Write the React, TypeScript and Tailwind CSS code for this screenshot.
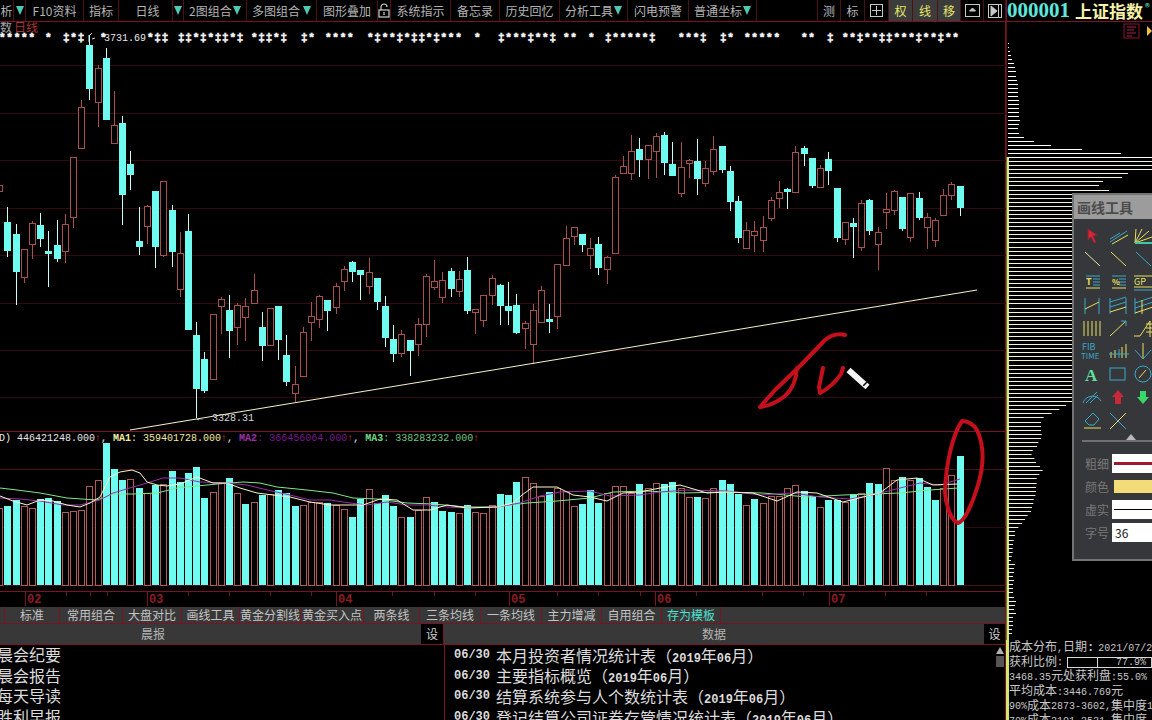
import type { ReactNode } from 'react';

const cjk = "[font-family:'Noto_Sans_CJK_SC','Liberation_Sans',sans-serif]";
const mono = "[font-family:'Liberation_Mono','Noto_Sans_CJK_SC',monospace]";

// type (0 red, 1 cyan), high, body top, body bottom, low
const candles: number[][] = [
  [0, 185, 185, 191, 191], [1, 207, 222, 251, 257], [1, 224, 234, 272, 305], [0, 249, 249, 277, 283], [0, 221, 223, 244, 259],
  [1, 213, 225, 239, 247], [1, 231, 251, 254, 287], [1, 220, 245, 259, 262], [0, 214, 224, 251, 263], [0, 157, 157, 217, 228],
  [0, 100, 107, 148, 148], [1, 35, 45, 89, 100], [0, 65, 68, 102, 127], [1, 48, 58, 120, 120], [0, 91, 125, 143, 143],
  [1, 116, 123, 195, 225], [1, 151, 164, 175, 190], [1, 207, 241, 247, 255], [0, 205, 206, 226, 244], [1, 191, 191, 247, 268],
  [0, 181, 181, 255, 257], [1, 205, 210, 252, 267], [0, 232, 253, 289, 297], [1, 214, 231, 330, 330], [1, 322, 335, 389, 418],
  [1, 352, 359, 391, 393], [0, 314, 314, 379, 379], [0, 297, 299, 306, 334], [1, 295, 310, 331, 358], [0, 303, 305, 327, 345],
  [0, 298, 306, 317, 341], [0, 274, 290, 303, 304], [1, 312, 327, 346, 361], [0, 308, 308, 345, 346], [1, 306, 306, 340, 360],
  [1, 335, 355, 382, 386], [0, 366, 384, 393, 402], [0, 327, 332, 376, 376], [0, 302, 316, 322, 341], [0, 295, 296, 319, 328],
  [1, 300, 300, 311, 331], [0, 283, 286, 307, 314], [0, 266, 269, 281, 291], [1, 261, 262, 272, 282], [1, 270, 270, 275, 300],
  [0, 258, 272, 286, 294], [1, 278, 278, 302, 310], [1, 296, 306, 338, 347], [1, 325, 339, 354, 362], [0, 330, 334, 353, 357],
  [1, 340, 340, 351, 376], [0, 318, 324, 344, 356], [0, 274, 276, 324, 337], [0, 260, 281, 287, 290], [0, 272, 280, 297, 303],
  [1, 268, 271, 289, 297], [0, 271, 279, 291, 297], [1, 257, 270, 311, 314], [0, 309, 309, 312, 334], [0, 295, 295, 320, 327],
  [0, 275, 278, 295, 305], [1, 284, 285, 306, 325], [1, 282, 306, 311, 325], [1, 294, 305, 333, 334], [0, 321, 323, 328, 349],
  [0, 304, 310, 344, 364], [0, 286, 290, 322, 322], [1, 304, 319, 322, 333], [0, 264, 264, 316, 329], [0, 226, 238, 265, 265],
  [0, 227, 227, 236, 245], [1, 234, 234, 245, 252], [0, 238, 248, 255, 269], [1, 237, 244, 268, 275], [0, 256, 257, 269, 284],
  [0, 175, 177, 253, 253], [0, 156, 166, 173, 173], [0, 135, 151, 173, 180], [1, 138, 149, 160, 177], [0, 145, 145, 159, 179],
  [0, 133, 136, 151, 178], [1, 132, 135, 163, 175], [1, 142, 164, 176, 176], [0, 142, 167, 193, 197], [0, 159, 160, 163, 178],
  [1, 139, 161, 179, 195], [0, 161, 168, 183, 187], [0, 136, 149, 171, 175], [1, 146, 146, 170, 173], [1, 166, 171, 202, 211],
  [1, 196, 201, 238, 243], [0, 222, 230, 248, 248], [0, 221, 231, 235, 252], [0, 216, 227, 240, 252], [0, 197, 200, 218, 221],
  [0, 181, 192, 198, 208], [1, 188, 189, 192, 209], [0, 146, 152, 192, 192], [1, 146, 148, 154, 166], [1, 158, 158, 186, 188],
  [0, 165, 168, 187, 188], [1, 152, 159, 171, 185], [1, 188, 188, 238, 242], [0, 222, 222, 239, 245], [1, 218, 223, 227, 258],
  [0, 200, 203, 247, 251], [1, 199, 200, 231, 235], [0, 227, 232, 244, 270], [0, 193, 209, 212, 229], [0, 190, 191, 210, 215],
  [1, 197, 197, 229, 231], [0, 193, 193, 237, 242], [1, 192, 198, 218, 220], [0, 213, 217, 227, 249], [0, 218, 220, 240, 247],
  [0, 189, 195, 215, 215], [0, 182, 184, 195, 200], [1, 186, 186, 208, 216],
];

// volume bars: type, top
const volumes: number[][] = [
  [0, 508], [1, 506], [1, 500], [0, 506], [0, 508], [1, 499], [1, 498], [1, 501], [0, 512], [0, 511], [0, 510], [0, 486], [0, 480],
  [1, 443], [1, 469], [1, 480], [0, 479], [1, 488], [0, 493], [1, 485], [0, 484], [1, 471], [1, 482], [1, 473], [1, 467], [1, 498],
  [0, 492], [0, 483], [1, 478], [0, 493], [1, 504], [0, 502], [1, 495], [0, 494], [1, 490], [1, 493], [1, 506], [0, 505], [0, 502],
  [0, 502], [1, 503], [0, 505], [0, 509], [1, 517], [1, 499], [0, 489], [1, 503], [1, 495], [1, 506], [0, 517], [1, 517], [0, 510],
  [0, 497], [1, 502], [1, 511], [1, 512], [0, 513], [1, 505], [0, 512], [0, 513], [0, 505], [1, 494], [1, 495], [1, 482], [0, 477],
  [0, 483], [0, 496], [1, 492], [0, 488], [0, 491], [0, 506], [1, 504], [1, 490], [1, 503], [0, 493], [0, 486], [0, 486], [0, 493],
  [1, 484], [0, 488], [0, 483], [1, 484], [1, 482], [0, 488], [0, 497], [1, 497], [0, 498], [0, 488], [1, 480], [1, 484], [1, 494],
  [0, 505], [1, 499], [0, 503], [0, 496], [0, 496], [0, 488], [0, 485], [1, 491], [1, 496], [0, 507], [1, 500], [1, 500], [0, 502],
  [1, 494], [0, 493], [1, 483], [1, 484], [0, 468], [0, 480], [1, 477], [0, 480], [1, 478], [1, 487], [1, 500], [0, 488], [0, 475],
  [1, 456],
];

const xOf = (n: number) => Math.round(7.3 + 8.21 * (n - 1));

const ma1 = '0,496 13,501 27,505 40,500 53,501 67,505 80,507 90,503 100,497 110,477 120,472 132,470 140,473 147,482 157,485 167,486 180,484 197,477 213,483 227,483 240,488 257,493 273,495 290,497 310,502 330,505 347,505 363,505 380,499 397,500 413,510 430,510 447,505 467,508 497,507 513,503 522,495 533,487 557,487 573,495 590,497 607,501 623,493 640,492 660,488 680,485 707,493 727,492 753,493 777,501 797,492 817,493 843,502 863,497 880,493 897,480 917,478 933,485 957,484';
const ma2 = '0,498 20,499 40,501 63,505 80,505 100,500 113,493 133,487 147,483 163,478 180,478 200,482 227,483 247,485 267,490 290,495 310,500 330,500 350,503 367,505 387,502 407,505 427,505 447,507 467,508 497,507 520,503 540,496 560,492 590,491 610,496 640,495 660,492 687,490 727,491 760,495 793,493 820,497 850,499 873,495 900,488 920,483 940,485 960,479';
const ma3 = '0,488 17,490 40,493 67,498 97,500 113,494 133,494 157,493 177,488 197,486 217,484 243,482 260,483 277,487 307,490 333,493 353,498 377,499 407,503 433,504 467,507 497,507 527,503 557,501 590,498 613,492 647,491 683,493 723,492 763,493 807,497 843,495 900,493 930,490 958,488';

const dates: [number, string][] = [[25, '02'], [147, '03'], [336, '04'], [509, '05'], [655, '06'], [829, '07']];
const axisTicks = [66, 90, 107, 188, 229, 270, 311, 392, 434, 475, 557, 598, 640, 696, 762, 803, 885, 926];
const grid = [65, 113, 160, 208, 255, 303, 350, 397];

// the row of status marks over the chart
const marks: [number, string][] = [
  [-1, '*****'], [45, '*'], [63, '‡*‡'], [100, '*'], [147, '*‡‡'], [178, '‡‡*‡*‡‡*‡'], [251, '*‡‡*‡'], [301, '‡*'], [325, '****'], [367, '*‡**‡*‡‡*‡***'],
  [474, '*'], [498, '‡***‡**‡'], [563, '**'], [588, '*'], [605, '‡*****‡'], [678, '***‡'], [720, '‡*'], [744, '*****'], [801, '**'], [827, '‡'], [842, '**‡**‡‡***‡**‡**'],
];

const distLens = [1, 1, 2, 3, 4, 6, 7, 8, 8, 9, 10, 10, 10, 10, 11, 11, 11, 11, 11, 12, 11, 10, 11, 16, 26, 43, 74, 113, 146, 146, 146, 146, 120, 114, 95, 91, 101];
const distEnds = [213, 195, 175, 152, 128, 120, 120, 120, 122, 120, 112, 108, 95, 92, 100, 105, 117, 125, 115, 107, 107, 105, 105, 103, 98, 97, 93, 90, 80, 72, 63, 52, 42, 42, 38, 36, 35, 35, 32, 30];
const distStubs = [7, 6, 6, 5, 6, 5, 5, 5, 6, 8, 7, 6, 8, 5, 5, 5, 4, 4];
const distRows: number[] = [
  ...distLens,
  ...Array.from({ length: 51 }, () => 84),
  ...distEnds.map((z) => z / 3 - 7),
  ...distStubs,
];

const toolbar: { w: number; label?: string; tri?: boolean; icon?: ReactNode; hi?: boolean; cls?: string }[] = [
  { w: 14, label: '析' },
  { w: 12, tri: true },
  { w: 58, label: 'F10资料' },
  { w: 35, label: '指标' },
  { w: 54, label: '日线', cls: 'pl-[4px]' },
  { w: 11, tri: true },
  { w: 63, label: '2图组合', tri: true },
  { w: 70, label: '多图组合', tri: true },
  { w: 61, label: '图形叠加' },
  { w: 13, icon: <Lock /> },
  { w: 60, label: '系统指示' },
  { w: 49, label: '备忘录' },
  { w: 60, label: '历史回忆' },
  { w: 68, label: '分析工具', tri: true },
  { w: 61, label: '闪电预警' },
  { w: 68, label: '普通坐标', tri: true },
  { w: 61 },
  { w: 23, label: '测' },
  { w: 24, label: '标' },
  { w: 24, icon: <PlusBox /> },
  { w: 24, label: '权', hi: true },
  { w: 25, label: '线', hi: true },
  { w: 23, label: '移', hi: true },
  { w: 23, icon: <PanelIcon /> },
  { w: 22, icon: <PlayIcon /> },
];

const tabs: [number, string][] = [
  [5, ''], [55, '标准'], [63, '常用组合'], [59, '大盘对比'], [58, '画线工具'], [61, '黄金分割线'], [63, '黄金买入点'], [56, '两条线'],
  [61, '三条均线'], [61, '一条均线'], [60, '主力增减'], [60, '自用组合'], [59, '存为模板'],
];

const reports = [
  ['06/30', '本月投资者情况统计表'],
  ['06/30', '主要指标概览'],
  ['06/30', '结算系统参与人个数统计表'],
  ['06/30', '登记结算公司证券存管情况统计表'],
];

function Lock() {
  return (
    <svg width="12" height="15" viewBox="0 0 12 15" fill="none" stroke="#d0d0d0" strokeWidth="1.2">
      <path d="M3 7V4a3 3 0 0 1 6 0" />
      <rect x="1" y="7" width="10" height="7" />
      <path d="M6 9v3" />
    </svg>
  );
}

function PlusBox() {
  return (
    <svg width="13" height="13" viewBox="0 0 13 13" fill="none" stroke="#c8c8c8">
      <rect x="0.5" y="0.5" width="12" height="12" />
      <path d="M6.5 2v9M2 6.5h9" />
    </svg>
  );
}

function PanelIcon() {
  return (
    <svg width="15" height="13" viewBox="0 0 15 13" fill="none" stroke="#c8c8c8">
      <rect x="0.5" y="0.5" width="14" height="12" />
      <path d="M7.5 4l-3 3h6z" fill="#c8c8c8" />
    </svg>
  );
}

function PlayIcon() {
  return (
    <svg width="14" height="14" viewBox="0 0 14 14" fill="none" stroke="#c8c8c8">
      <rect x="0.5" y="0.5" width="13" height="13" />
      <path d="M3 2l6 5-6 5z" fill="#c8c8c8" />
      <path d="M10.5 1v12" />
    </svg>
  );
}

function Triangle() {
  return <span className="h-0 w-0 border-x-[4px] border-t-[9px] border-x-transparent border-t-[#4fc8b4]" />;
}

function Toolbar() {
  return (
    <div className={`flex h-[22px] border-b border-[#7a1424] bg-black text-[12px] text-[#b4b4b4] ${cjk}`}>
      {toolbar.map((item, i) => (
        <div
          key={i}
          style={{ width: item.w }}
          className={`flex shrink-0 items-center whitespace-nowrap border-r border-[#4c1018] ${
            item.label && item.tri ? 'justify-between px-[5px]' : 'justify-center'
          } ${item.hi ? 'bg-[#3c3c3c] text-[#e6e868]' : ''} ${item.cls ?? ''}`}
        >
          {item.label && <span>{item.label}</span>}
          {item.icon}
          {item.tri && <Triangle />}
        </div>
      ))}
      <div className="flex shrink-0 items-center whitespace-nowrap border-l border-[#7a1424] text-[17px] leading-none">
        <span className="[font-family:'Liberation_Serif',serif] text-[21px] font-bold text-[#5ce8dc]">000001</span>
        <span className="ml-[5px] font-bold text-[#f6f2a8]">上证指数</span>
        <span className="mb-[8px] ml-[2px] text-[10px] text-[#5ce8dc]">®</span>
      </div>
    </div>
  );
}

function Chart() {
  return (
    <svg width="1006" height="585" viewBox="0 22 1006 585" className="block">
      <g stroke="#320a10" strokeWidth="1">
        {grid.map((y) => (
          <line key={y} x1="0" x2="1006" y1={y + 0.5} y2={y + 0.5} />
        ))}
      </g>
      <line x1="0" x2="1006" y1="431.5" y2="431.5" stroke="#7a1424" />
      <line x1="0" x2="1006" y1="469.5" y2="469.5" stroke="#4c1018" />
      <line x1="0" x2="1006" y1="527.5" y2="527.5" stroke="#2c0a10" />
      <line x1="0" x2="1006" y1="585.5" y2="585.5" stroke="#4c1018" />
      <line x1="0" x2="1006" y1="591.5" y2="591.5" stroke="#7a1424" />

      <text x="0" y="32" fontSize="12" fill="#a8a8a8" className={cjk}>数</text>
      <text x="14" y="32" fontSize="12" fill="#a83434" className={cjk}>日线</text>
      {marks.map(([x, s]) => (
        <text key={x} x={x} y="41" fontSize="11" fontWeight="700" fill="#f4f4f4" stroke="#f4f4f4" strokeWidth="0.6" letterSpacing="0.75" className={mono}>{s}</text>
      ))}
      <text x="104" y="41" fontSize="10" fill="#e8e8e8" className={mono}>3731.69</text>
      <path d="M89 35v7M92 33l-3 3M95 38l-3 1" stroke="#e0e0e0" fill="none" />

      {candles.map(([t, h, top, bot, l], i) => {
        const x = xOf(i);
        if (t === 1) {
          return (
            <g key={i}>
              <line x1={x + 0.5} x2={x + 0.5} y1={h} y2={l} stroke="#c4fff8" />
              <rect x={x - 3} y={top} width="7" height={bot - top} fill="#6ffcf0" />
            </g>
          );
        }
        return (
          <g key={i} stroke="#a85050" fill="none">
            <line x1={x + 0.5} x2={x + 0.5} y1={h} y2={top} />
            <line x1={x + 0.5} x2={x + 0.5} y1={bot} y2={l} />
            <rect x={x - 2.5} y={top + 0.5} width="6" height={bot - top} fill="#000" />
          </g>
        );
      })}

      <line x1="130" y1="430" x2="977" y2="290" stroke="#f6f2c8" />
      <text x="197" y="421" fontSize="10" fill="#e8e8e8" className={mono}>←</text>
      <text x="212" y="421" fontSize="10" fill="#d8d8d8" className={mono}>3328.31</text>

      {volumes.map(([t, top], i) => {
        const x = xOf(i);
        return t === 1 ? (
          <rect key={i} x={x - 3} y={top} width="7" height={585 - top} fill="#6ffcf0" />
        ) : (
          <rect key={i} x={x - 2.5} y={top + 0.5} width="6" height={585 - top} fill="#000" stroke="#b05a5a" />
        );
      })}
      <polyline points={ma3} fill="none" stroke="#7ee88a" />
      <polyline points={ma2} fill="none" stroke="#9a30a8" />
      <polyline points={ma1} fill="none" stroke="#fbf8c8" />

      <text y="440.5" fontSize="10" className={`${mono} [white-space:pre]`} x="-1">
        <tspan fill="#e8e8e8">D) 446421248.000</tspan>
        <tspan fill="#d04848" fontWeight="700">↑</tspan>
        <tspan fill="#e8e8e8">, </tspan>
        <tspan fill="#f0eca0" fontWeight="700">MA1</tspan>
        <tspan fill="#f0eca0">: 359401728.000</tspan>
        <tspan fill="#d04848" fontWeight="700">↑</tspan>
        <tspan fill="#e8e8e8">, </tspan>
        <tspan fill="#9a30a8" fontWeight="700">MA2</tspan>
        <tspan fill="#7a1a90">: 366456064.000</tspan>
        <tspan fill="#d04848" fontWeight="700">↑</tspan>
        <tspan fill="#e8e8e8">, </tspan>
        <tspan fill="#70d880" fontWeight="700">MA3</tspan>
        <tspan fill="#70c880">: 338283232.000</tspan>
        <tspan fill="#d04848" fontWeight="700">↑</tspan>
      </text>

      <g stroke="#6a1420">
        {axisTicks.map((x) => (
          <line key={x} x1={x + 0.5} x2={x + 0.5} y1="592" y2="596" />
        ))}
      </g>
      {dates.map(([x, d]) => (
        <g key={d}>
          <line x1={x + 0.5} x2={x + 0.5} y1="592" y2="606" stroke="#7a1424" />
          <text x={x + 2} y="603" fontSize="12" fontWeight="700" fill="#8c1c24" className={mono}>{d}</text>
        </g>
      ))}

      {/* hand-drawn marks */}
      <g fill="none" stroke="#c60f1c" strokeWidth="4" strokeLinecap="round" strokeLinejoin="round">
        <path d="M845 335Q835 332 825 340L800 366L775 390L760 407Q772 406 785 396Q796 386 797 368" />
        <path d="M823 368L819 387L820 393Q833 386 841 374L843 368" />
        <path d="M962 421C954 432 946 460 945 492C946 508 952 521 958 523C964 522 972 505 978 485C984 465 984 445 977 430C973 424 967 421 962 421Z" />
      </g>
      <path d="M848.5 370L867.5 387" stroke="#f4f4f4" strokeWidth="6" />
      <path d="M864.5 383.5L865.5 384.5" stroke="#000" strokeWidth="5" />
    </svg>
  );
}

function Tabs() {
  return (
    <div className={`flex h-[17px] border-b border-[#7a1424] bg-[#383838] text-[12px] leading-[16px] text-[#c4c4c4] ${cjk}`}>
      {tabs.map(([w, label], i) => (
        <div
          key={i}
          style={{ width: w }}
          className={`shrink-0 whitespace-nowrap border-r border-[#7a1424] text-center ${label === '存为模板' ? 'text-[#52e0d0]' : ''}`}
        >
          {label}
        </div>
      ))}
    </div>
  );
}

function PanelHeader() {
  return (
    <div className={`flex h-[21px] border-b border-[#7a1424] bg-[#383838] text-[12px] leading-[20px] text-[#b4b4b4] ${cjk}`}>
      <div className="flex-1 pl-[141px]">晨报</div>
      <div className="w-[22px] bg-black text-center text-[#d0d0d0]">设</div>
      <div className="w-[541px] border-l border-[#7a1424] text-center">数据</div>
      <div className="w-[21px] bg-black text-center text-[#d0d0d0]">设</div>
    </div>
  );
}

function Lists() {
  const num = `text-[12px] font-bold ${mono}`;
  return (
    <div className={`flex min-h-0 flex-1 overflow-hidden text-[16px] text-[#dcdcdc] ${cjk}`}>
      <div className="w-[444px] shrink-0 -translate-y-px">
        {['晨会纪要', '晨会报告', '每天导读', '胜利早报'].map((t) => (
          <div key={t} className="-ml-[3px] flex h-[20.6px] items-center">{t}</div>
        ))}
      </div>
      <div className="min-w-0 flex-1 border-l border-[#7a1424] pl-[9px]">
        {reports.map(([date, title]) => (
          <div key={title} className="flex h-[20.6px] items-center whitespace-nowrap">
            <span className={`w-[42px] shrink-0 ${num}`}>{date}</span>
            <span>
              {title}（<span className={num}>2019</span>年<span className={num}>06</span>月）
            </span>
          </div>
        ))}
      </div>
      <div className="w-[10px] shrink-0 pt-[2px]">
        <div className="mx-auto h-0 w-0 border-x-[4px] border-b-[7px] border-x-transparent border-b-[#b0b0b0]" />
        <div className="mx-auto mt-[2px] h-[11px] w-[8px] bg-[#555]" />
      </div>
    </div>
  );
}

function Distribution() {
  return (
    <svg width="146" height="618" viewBox="1006 22 146 618" className="block">
      <line x1="1006.5" x2="1006.5" y1="22" y2="157" stroke="#5a1020" />
      <rect x="1006.5" y="157" width="2.5" height="483" fill="#d8e470" />
      {distRows.map((len, k) => (
        <rect
          key={k}
          x="1008"
          y={Math.round(43 + k * 4.07)}
          width={len}
          height="1"
          fill={k > 28 ? '#f2f4d4' : '#ffffff'}
        />
      ))}
      <g fill="none" stroke="#8c1430">
        <rect x="1124" y="24" width="15" height="14" />
        <path d="M1127 27h9M1127 30h7M1127 33h9M1127 36h5" stroke="#b02050" />
      </g>
      <path d="M1147 26l5 5-5 5z" fill="#f0c040" />
    </svg>
  );
}

function CostPanel() {
  const small = 'text-[10px]';
  const row = 'flex h-[14.6px] items-center';
  return (
    <div className={`h-[80px] overflow-hidden whitespace-nowrap border-l-[3px] border-[#d8e470] pt-px text-[12px] text-[#c8c8c8] ${mono}`}>
      <div className={row}>
        成本分布<span className={small}>,</span>日期<span className="font-bold">:</span><span className={`ml-[4px] ${small}`}>2021/07/2</span>
      </div>
      <div className={row}>
        获利比例<span className={small}>:</span>
        <div className="ml-[4px] flex h-[11px] flex-1 border border-[#d8d8d8]">
          <div className="w-[30px] border-r border-[#d8d8d8]" />
          <span className="pl-[18px] text-[10px] leading-[9px]">77.9%</span>
        </div>
      </div>
      <div className={row}><span className={small}>3468.35</span>元处获利盘<span className={small}>:55.0%</span></div>
      <div className={row}>平均成本<span className={small}>:3446.769</span>元</div>
      <div className={row}><span className={small}>90%</span>成本<span className={small}>2873-3602,</span>集中度<span className={small}>1</span></div>
      <div className={row}><span className={small}>70%</span>成本<span className={small}>3101-3531,</span>集中度</div>
    </div>
  );
}

const C = '#3aa8c8';
const Y = '#e8e060';

const tools: ReactNode[] = [
  <path key="a" d="M7 3l9 6-4 1 3 6-2 1-3-6-3 3z" fill="#d02838" stroke="#902030" />,
  <g key="b" stroke={C}><path d="M3 16L20 5" /><path d="M5 18L21 9" stroke={Y} /><path d="M3 13l10-6" /></g>,
  <g key="c" stroke={Y}><path d="M3 17L4 3M3 17L10 3M3 17L17 5M3 17L20 11" /><path d="M3 17h18" stroke="#40c8a0" strokeWidth="2" /></g>,
  <path key="d" d="M4 3L19 17" stroke="#e8e8a0" />,
  <path key="e" d="M4 3L19 17" stroke={Y} />,
  <path key="f" d="M4 3L19 17" stroke={C} />,
  <g key="g"><path d="M5 4h14M12 7h7M12 10h7M12 13h7" stroke={C} /><path d="M5 16h14" stroke={Y} /><text x="5" y="13" fontSize="9" fontWeight="700" fill={Y}>T</text></g>,
  <g key="h"><path d="M5 4h14M12 7h7M12 10h7M12 13h7" stroke={C} /><path d="M5 16h14" stroke={Y} /><text x="5" y="13" fontSize="8" fontWeight="700" fill={Y}>%</text></g>,
  <g key="i"><path d="M2 4h20M2 15h20" stroke={Y} /><path d="M2 18h20" stroke={C} /><text x="2" y="13" fontSize="9" fill={Y}>GP</text></g>,
  <g key="j" stroke={C}><path d="M4 3v16M18 3v16" /><path d="M4 14L18 7" stroke={Y} /></g>,
  <g key="k" stroke={C}><path d="M3 3v16M19 3v16M3 7l16-5M3 12l16-5" /><path d="M3 17l16-5" stroke={Y} /></g>,
  <g key="l" stroke={C}><path d="M3 3v16M3 8l18-6M3 13l18-6" /><path d="M3 18l18-6M10 5v14" stroke={Y} /></g>,
  <path key="m" d="M3 3v15M7 3v15M11 3v15M15 3v15M19 3v15" stroke={Y} />,
  <g key="n" stroke={Y}><path d="M3 18L19 3" /><path d="M14 3h5v5" stroke={C} fill="none" /></g>,
  <g key="o" stroke={Y} fill="none"><path d="M2 18h6L18 3v16" /><path d="M14 6h7M14 10h7M14 14h7" /></g>,
  <g key="p"><text x="1" y="9" fontSize="9" fill={C}>FIB</text><text x="0" y="18" fontSize="8" fill={C}>TIME</text></g>,
  <g key="q" stroke={Y}><path d="M4 11v6M8 9v8M15 6v11M19 3v14" /><path d="M2 13h20M12 8v9" stroke={C} /></g>,
  <g key="r" stroke={Y} fill="none"><path d="M11 2v16" /><path d="M3 9l8 9 8-9" stroke={C} /></g>,
  <text key="s" x="4" y="17" fontSize="17" fontWeight="700" fill="#60e0a0" fontFamily="Liberation Serif">A</text>,
  <rect key="t" x="3" y="4" width="15" height="12" fill="none" stroke={C} />,
  <g key="u" fill="none" stroke={C}><circle cx="11" cy="10" r="8" /><path d="M7 14l7-8" stroke={Y} /></g>,
  <g key="v" fill="none" stroke={C}><path d="M2 16A10 10 0 0 1 20 14" /><path d="M5 16L16 5M9 16l8-8" /></g>,
  <path key="w" d="M11 3l6 7h-3v7H8v-7H5z" fill="#c82838" />,
  <path key="x" d="M11 17l-6-7h3V4h6v6h3z" fill="#38d868" />,
  <g key="y" fill="none"><path d="M4 11l8-8 6 6-5 6H8z" stroke={C} /><path d="M3 18h17" stroke={Y} /></g>,
  <g key="z" fill="none"><path d="M3 3l16 16" stroke={C} /><path d="M19 3L3 19" stroke={Y} /></g>,
];

function DrawingTools() {
  const label = 'text-[12px] leading-none text-[#787878] w-[27px] shrink-0';
  return (
    <div className={`absolute left-[1072px] top-[193px] h-[368px] w-[100px] border-2 border-[#747474] bg-[#36373a] ${cjk}`}>
      <div className="h-[24px] bg-[#9c9c9c] pl-[3px] text-[14px] font-bold leading-[24px] text-[#4c4c4c]">画线工具</div>
      <div className="grid grid-cols-[repeat(3,25.5px)] grid-rows-[repeat(9,23px)] pl-[7px] pt-[7px]">
        {tools.map((t, i) => (
          <svg key={i} width="23" height="21" viewBox="0 0 23 21" className="overflow-visible">{t}</svg>
        ))}
      </div>
      <div className="relative mt-[7px] ml-[8px] h-[2px] bg-[#707070]">
        <div className="absolute -top-[6px] left-[44px] h-0 w-0 border-x-[5px] border-b-[6px] border-x-transparent border-b-[#b8b8b8]" />
      </div>
      <div className="mt-[12px] flex flex-col gap-[4px] pl-[11px]">
        <div className="flex h-[19px] items-center">
          <span className={label}>粗细</span>
          <div className="flex h-full flex-1 items-center bg-white"><div className="ml-[2px] h-[3px] w-full bg-[#a01828]" /></div>
        </div>
        <div className="flex h-[19px] items-center">
          <span className={label}>颜色</span>
          <div className="ml-[2px] h-[13px] flex-1 bg-[#f2dc78]" />
        </div>
        <div className="flex h-[19px] items-center">
          <span className={label}>虚实</span>
          <div className="flex h-full flex-1 items-center bg-white"><div className="ml-[2px] h-px w-full bg-black" /></div>
        </div>
        <div className="flex h-[19px] items-center">
          <span className={label}>字号</span>
          <div className="h-full flex-1 bg-white pl-[3px] text-[12px] leading-[19px] text-[#202020]">36</div>
        </div>
      </div>
    </div>
  );
}

export default function App() {
  return (
    <div className="relative h-[720px] w-[1152px] overflow-hidden bg-black">
      <Toolbar />
      <div className="flex h-[698px]">
        <div className="flex w-[1006px] shrink-0 flex-col border-r border-[#7a1424]">
          <Chart />
          <Tabs />
          <PanelHeader />
          <Lists />
        </div>
        <div className="min-w-0 flex-1">
          <Distribution />
          <CostPanel />
        </div>
      </div>
      <DrawingTools />
    </div>
  );
}
